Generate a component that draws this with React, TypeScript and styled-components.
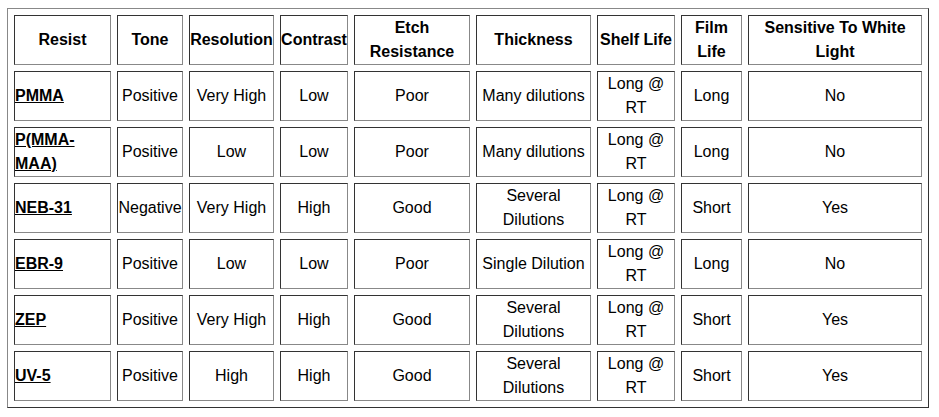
import React from "react";
import styled, { createGlobalStyle } from "styled-components";

const GlobalStyle = createGlobalStyle`
  html, body {
    margin: 0;
    background: #fff;
  }
  body {
    padding: 8px 0 0 7px;
    font-family: "Liberation Sans", Arial, sans-serif;
    color: #000;
  }
`;

/* TABLE */

const ResistTable = styled.table`
  width: 922px;
  table-layout: fixed;
  border-collapse: separate;
  border-spacing: 6px;
  border: 1px solid;
  border-color: #888 #333 #333 #888;
  font-size: 16px;
  line-height: 24px;
`;

const Cell = styled.td<{ $left?: boolean }>`
  box-sizing: border-box;
  height: 50px;
  padding: 0;
  border: 1px solid;
  border-color: #333 #888 #888 #333;
  text-align: ${(p) => (p.$left ? "left" : "center")};
  vertical-align: middle;
`;

const HeadCell = styled(Cell).attrs({ as: "th" })<{ $width: number }>`
  width: ${(p) => p.$width}px;
  font-weight: 700;
`;

const ResistLink = styled.a`
  color: #000;
  font-weight: 700;
  text-decoration: underline;
`;

/* DATA */

const columns = [
  { label: "Resist", width: 97 },
  { label: "Tone", width: 66 },
  { label: "Resolution", width: 85 },
  { label: "Contrast", width: 68 },
  { label: "Etch Resistance", width: 116 },
  { label: "Thickness", width: 115 },
  { label: "Shelf Life", width: 78 },
  { label: "Film Life", width: 61 },
  { label: "Sensitive To White Light", width: 174 },
];

const rows = [
  ["PMMA", "Positive", "Very High", "Low", "Poor", "Many dilutions", "Long @ RT", "Long", "No"],
  ["P(MMA-MAA)", "Positive", "Low", "Low", "Poor", "Many dilutions", "Long @ RT", "Long", "No"],
  ["NEB-31", "Negative", "Very High", "High", "Good", "Several Dilutions", "Long @ RT", "Short", "Yes"],
  ["EBR-9", "Positive", "Low", "Low", "Poor", "Single Dilution", "Long @ RT", "Long", "No"],
  ["ZEP", "Positive", "Very High", "High", "Good", "Several Dilutions", "Long @ RT", "Short", "Yes"],
  ["UV-5", "Positive", "High", "High", "Good", "Several Dilutions", "Long @ RT", "Short", "Yes"],
];

/* COMPONENT */

const App = () => {
  return (
    <>
      <GlobalStyle />
      <ResistTable>
        <thead>
          <tr>
            {columns.map((col) => (
              <HeadCell key={col.label} $width={col.width}>
                {col.label}
              </HeadCell>
            ))}
          </tr>
        </thead>
        <tbody>
          {rows.map((row) => (
            <tr key={row[0]}>
              {row.map((value, idx) =>
                idx === 0 ? (
                  <Cell key={idx} $left>
                    <ResistLink href="#">{value}</ResistLink>
                  </Cell>
                ) : (
                  <Cell key={idx}>{value}</Cell>
                )
              )}
            </tr>
          ))}
        </tbody>
      </ResistTable>
    </>
  );
};

export default App;
